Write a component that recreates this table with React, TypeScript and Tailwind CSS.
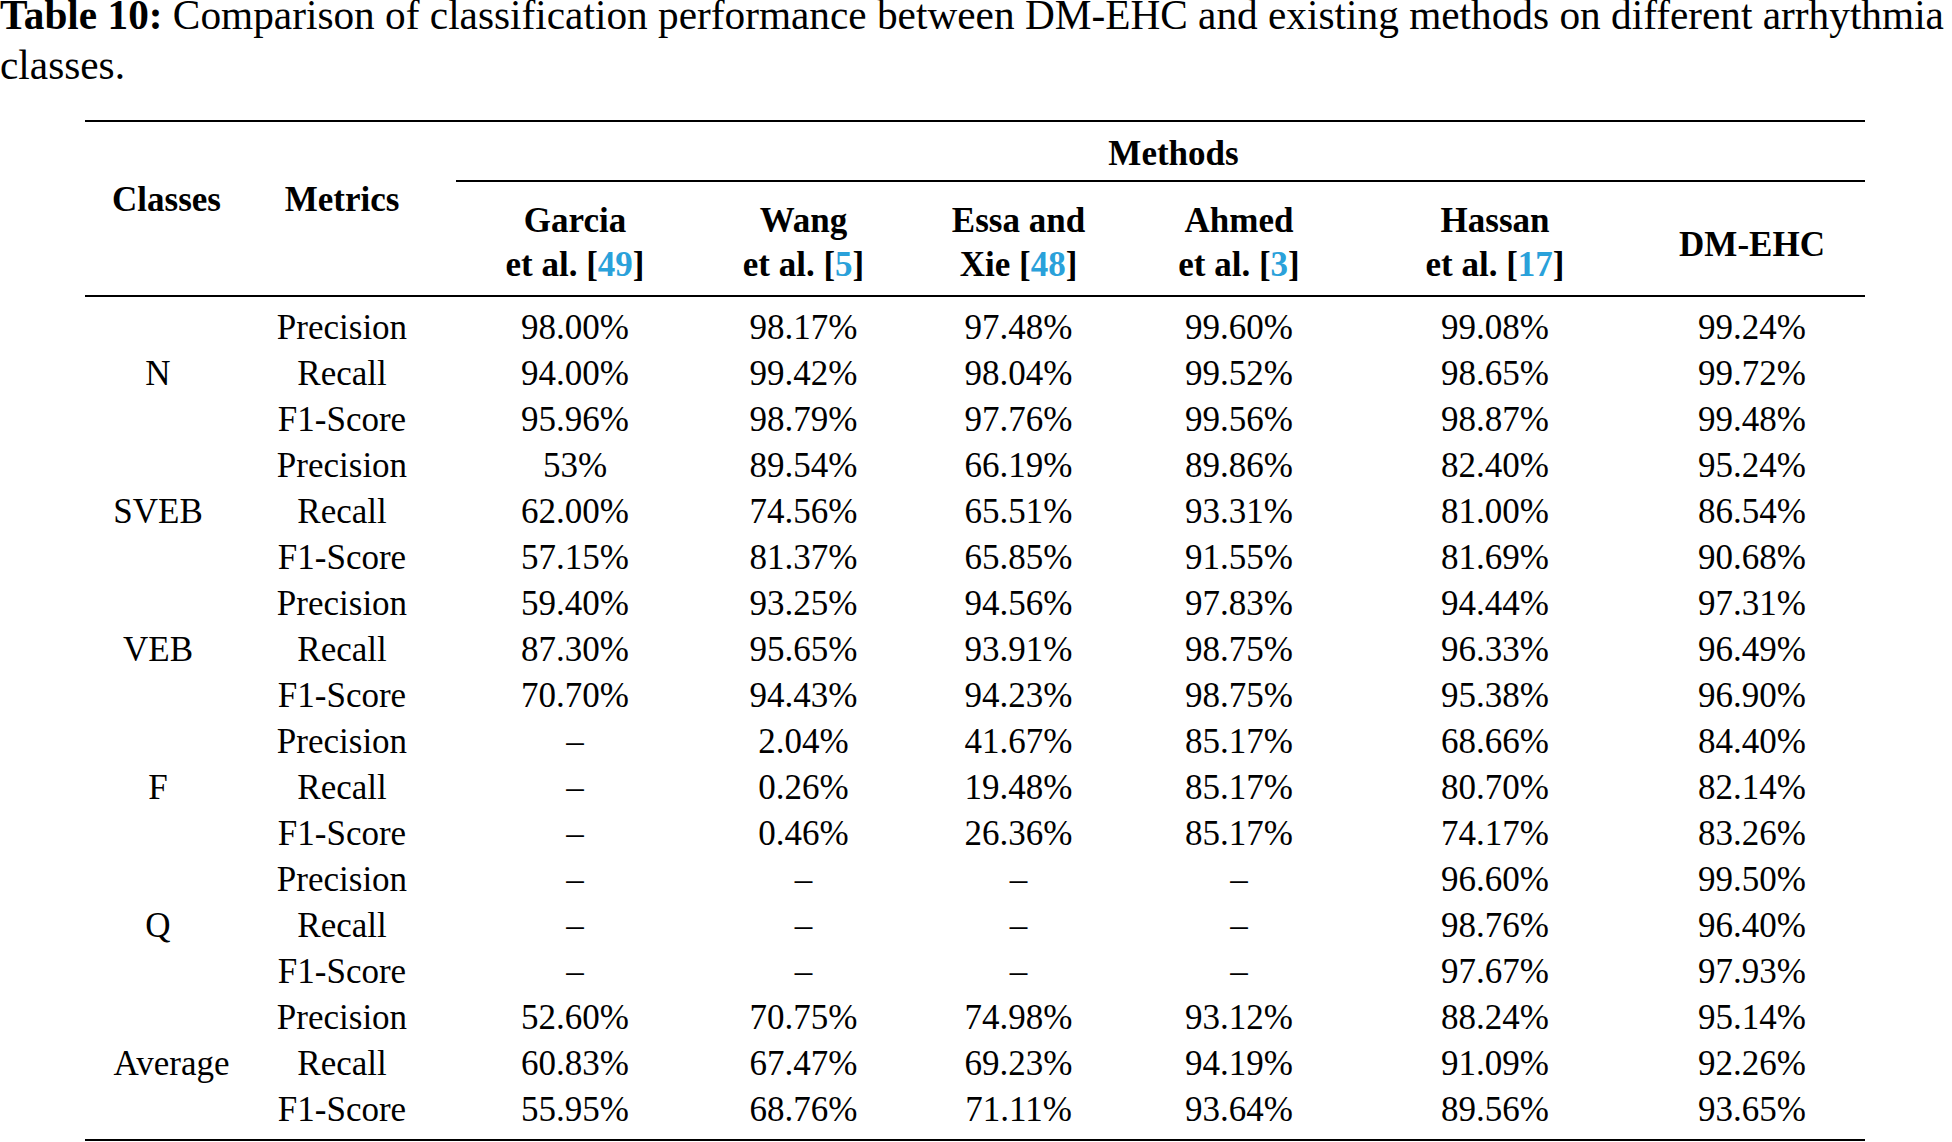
import React from 'react';

// column widths measured from the reference table
const COLS = 'grid grid-cols-[146px_222px_244px_213px_217px_224px_288px_226px]';

type Group = { cls: string; shift?: boolean; rows: string[][] };

const groups: Group[] = [
  {
    cls: 'N',
    rows: [
      ['Precision', '98.00%', '98.17%', '97.48%', '99.60%', '99.08%', '99.24%'],
      ['Recall', '94.00%', '99.42%', '98.04%', '99.52%', '98.65%', '99.72%'],
      ['F1-Score', '95.96%', '98.79%', '97.76%', '99.56%', '98.87%', '99.48%'],
    ],
  },
  {
    cls: 'SVEB',
    rows: [
      ['Precision', '53%', '89.54%', '66.19%', '89.86%', '82.40%', '95.24%'],
      ['Recall', '62.00%', '74.56%', '65.51%', '93.31%', '81.00%', '86.54%'],
      ['F1-Score', '57.15%', '81.37%', '65.85%', '91.55%', '81.69%', '90.68%'],
    ],
  },
  {
    cls: 'VEB',
    rows: [
      ['Precision', '59.40%', '93.25%', '94.56%', '97.83%', '94.44%', '97.31%'],
      ['Recall', '87.30%', '95.65%', '93.91%', '98.75%', '96.33%', '96.49%'],
      ['F1-Score', '70.70%', '94.43%', '94.23%', '98.75%', '95.38%', '96.90%'],
    ],
  },
  {
    cls: 'F',
    rows: [
      ['Precision', '–', '2.04%', '41.67%', '85.17%', '68.66%', '84.40%'],
      ['Recall', '–', '0.26%', '19.48%', '85.17%', '80.70%', '82.14%'],
      ['F1-Score', '–', '0.46%', '26.36%', '85.17%', '74.17%', '83.26%'],
    ],
  },
  {
    cls: 'Q',
    rows: [
      ['Precision', '–', '–', '–', '–', '96.60%', '99.50%'],
      ['Recall', '–', '–', '–', '–', '98.76%', '96.40%'],
      ['F1-Score', '–', '–', '–', '–', '97.67%', '97.93%'],
    ],
  },
  {
    cls: 'Average',
    shift: true,
    rows: [
      ['Precision', '52.60%', '70.75%', '74.98%', '93.12%', '88.24%', '95.14%'],
      ['Recall', '60.83%', '67.47%', '69.23%', '94.19%', '91.09%', '92.26%'],
      ['F1-Score', '55.95%', '68.76%', '71.11%', '93.64%', '89.56%', '93.65%'],
    ],
  },
];

const methods = [
  { top: 'Garcia', bottom: 'et al.', ref: '49' },
  { top: 'Wang', bottom: 'et al.', ref: '5' },
  { top: 'Essa and', bottom: 'Xie', ref: '48' },
  { top: 'Ahmed', bottom: 'et al.', ref: '3' },
  { top: 'Hassan', bottom: 'et al.', ref: '17' },
];

const Cite = ({ n }: { n: string }) => (
  <>
    [<span className="text-[#2aa1da]">{n}</span>]
  </>
);

const App = () => {
  return (
    <div className="w-[1952px] h-[1142px] overflow-hidden bg-white text-black font-['Liberation_Serif',serif]">
      {/* caption */}
      <div className="text-[41.3px]">
        <div className="whitespace-nowrap leading-[31px]">
          <span className="font-bold">Table 10:</span> Comparison of classification performance between DM-EHC and existing methods on different arrhythmia
        </div>
        <div className="leading-[69px]">classes.</div>
      </div>

      <div className="mt-[20px] ml-[85px] w-[1780px] border-t-2 border-b-2 border-black text-[35px]">
        {/* header */}
        <div className={`${COLS} grid-rows-[auto_auto] border-b-2 border-black font-bold`}>
          <div className="row-span-2 pt-[56px] pl-[17px] text-center leading-[44px]">Classes</div>
          <div className="row-span-2 pt-[56px] text-center leading-[44px]">Metrics</div>
          <div className="col-span-6 ml-[3px] border-b-2 border-black pt-[9px] pb-[3px] pl-[26px] text-center leading-[46px]">
            Methods
          </div>
          {methods.map((m) => (
            <div key={m.top} className="pt-[17px] pb-[8px] text-center leading-[44px] whitespace-nowrap">
              <div>{m.top}</div>
              <div>
                {m.bottom} <Cite n={m.ref} />
              </div>
            </div>
          ))}
          <div className="pt-[41px] text-center leading-[44px]">DM-EHC</div>
        </div>

        {/* body */}
        <div className="pt-[8px] pb-[6px] leading-[46px]">
          {groups.map((g) =>
            g.rows.map((r, i) => (
              <div key={g.cls + i} className={`${COLS} text-center whitespace-nowrap`}>
                <div className={g.shift ? 'pl-[27px]' : ''}>{i === 1 ? g.cls : ''}</div>
                {r.map((v, j) => (
                  <div key={j}>{v}</div>
                ))}
              </div>
            ))
          )}
        </div>
      </div>
    </div>
  );
};

export default App;
